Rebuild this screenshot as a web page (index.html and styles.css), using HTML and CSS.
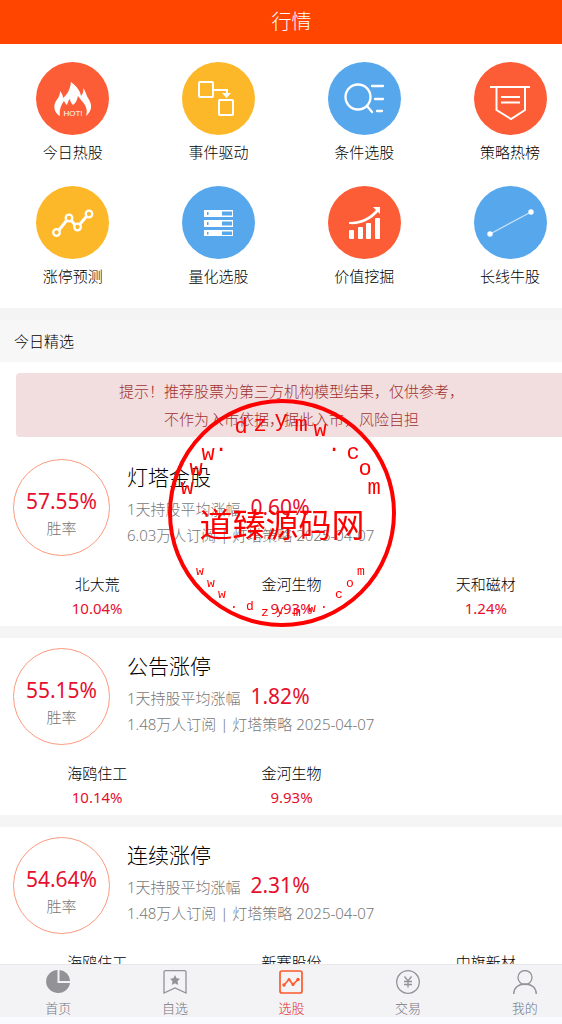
FILE: index.html
```html
<!DOCTYPE html>
<html lang="zh-CN">
<head>
    <meta charset="UTF-8">
    <meta name="viewport" content="width=device-width, initial-scale=1.0">
    <title>行情</title>
    <link rel="stylesheet" href="styles.css">
</head>
<body>
<div class="page">

    <header class="header">
        <h1>行情</h1>
    </header>

    <main class="content">

        <!-- 功能入口 -->
        <nav class="menu">
            <a href="#">
                <svg class="menu-icon red" viewBox="0 0 73 73">
                    <path fill="#fff" d="M24 54C18 51 17 44 20 39C23 35 24 33 24 29C26 31 27 34 27 36C32 32 34 27 35 20C40 24 44 28 45 34C47 31 48 29 47 26C50 29 50 33 52 36C56 42 57 48 50 54C52 48 50 43 45 38L42 34C41 38 40 41 37 43C35 41 34 39 34 37C32 38 32 41 31 43C29 42 29 40 28 39C25 43 23 48 24 54Z"/>
                    <text x="37" y="54" class="hot">HOT!</text>
                </svg>
                <span>今日热股</span>
            </a>
            <a href="#">
                <svg class="menu-icon yellow line" viewBox="0 0 73 73">
                    <rect x="17" y="20" width="14" height="15" rx="1"/>
                    <rect x="37" y="38" width="14" height="15" rx="1"/>
                    <path d="M32 28H45V32"/>
                    <path fill="#fff" stroke="none" d="M40 31H49L44.5 36Z"/>
                </svg>
                <span>事件驱动</span>
            </a>
            <a href="#">
                <svg class="menu-icon blue line bold" viewBox="0 0 73 73">
                    <circle cx="30" cy="35" r="12.5"/>
                    <path stroke-linecap="round" d="M39 44L44 50M44 24H55M47 37H55M49 49H54"/>
                </svg>
                <span>条件选股</span>
            </a>
            <a href="#">
                <svg class="menu-icon red line" viewBox="0 0 73 73">
                    <path d="M16 25H56M22.5 25V48L37 57L51 48V25M27 35H46M27 40.5H46"/>
                </svg>
                <span>策略热榜</span>
            </a>
            <a href="#">
                <svg class="menu-icon yellow line bold" viewBox="0 0 73 73">
                    <path stroke-width="3" d="M23 44L31 34M35 34L39 39M44 38L51 30"/>
                    <circle cx="20.5" cy="46.5" r="3.3"/>
                    <circle cx="33" cy="32" r="3.3"/>
                    <circle cx="41.5" cy="41" r="3.3"/>
                    <circle cx="53" cy="28" r="3.3"/>
                </svg>
                <span>涨停预测</span>
            </a>
            <a href="#">
                <svg class="menu-icon blue" viewBox="0 0 73 73">
                    <g fill="#fff" fill-rule="evenodd">
                        <path d="M22 24H51V31H22ZM40 25.5V29.5H50V25.5ZM25 26V29H26.5V26Z"/>
                        <path d="M22 34H51V41H22ZM40 35.5V39.5H50V35.5ZM25 36V39H26.5V36Z"/>
                        <path d="M22 44H51V50H22ZM40 45.5V49H50V45.5ZM25 46V48.5H26.5V46Z"/>
                    </g>
                </svg>
                <span>量化选股</span>
            </a>
            <a href="#">
                <svg class="menu-icon red" viewBox="0 0 73 73">
                    <g fill="#fff">
                        <rect x="21" y="44" width="5" height="9" rx="1"/>
                        <rect x="30" y="41" width="5" height="12" rx="1"/>
                        <rect x="38" y="37" width="5" height="16" rx="1"/>
                        <rect x="47" y="32" width="5" height="21" rx="1"/>
                        <path d="M45 21H52V28L50 26C43 34 33 39 21 38V36C32 36 41 32 48 24Z"/>
                    </g>
                </svg>
                <span>价值挖掘</span>
            </a>
            <a href="#">
                <svg class="menu-icon blue" viewBox="0 0 73 73">
                    <path stroke="#c5e1f8" stroke-width="1.3" d="M16 48L57 26"/>
                    <circle cx="16" cy="48" r="2.7" fill="#fff"/>
                    <circle cx="57" cy="26" r="2.7" fill="#fff"/>
                </svg>
                <span>长线牛股</span>
            </a>
        </nav>

        <h2 class="section-title">今日精选</h2>

        <p class="alert">提示！推荐股票为第三方机构模型结果，仅供参考，<br>不作为入市依据，据此入市，风险自担</p>

        <!-- 策略列表 -->
        <section class="card">
            <div class="card-top">
                <div class="rate"><b>57.55%</b><span>胜率</span></div>
                <div class="info">
                    <h3>灯塔金股</h3>
                    <p>1天持股平均涨幅 <em>0.60%</em></p>
                    <p>6.03万人订阅 | 灯塔策略 2025-04-07</p>
                </div>
            </div>
            <ul class="stocks">
                <li>北大荒<span>10.04%</span></li>
                <li>金河生物<span>9.93%</span></li>
                <li>天和磁材<span>1.24%</span></li>
            </ul>
        </section>

        <section class="card">
            <div class="card-top">
                <div class="rate"><b>55.15%</b><span>胜率</span></div>
                <div class="info">
                    <h3>公告涨停</h3>
                    <p>1天持股平均涨幅 <em>1.82%</em></p>
                    <p>1.48万人订阅 | 灯塔策略 2025-04-07</p>
                </div>
            </div>
            <ul class="stocks">
                <li>海鸥住工<span>10.14%</span></li>
                <li>金河生物<span>9.93%</span></li>
            </ul>
        </section>

        <section class="card">
            <div class="card-top">
                <div class="rate"><b>54.64%</b><span>胜率</span></div>
                <div class="info">
                    <h3>连续涨停</h3>
                    <p>1天持股平均涨幅 <em>2.31%</em></p>
                    <p>1.48万人订阅 | 灯塔策略 2025-04-07</p>
                </div>
            </div>
            <ul class="stocks">
                <li>海鸥住工</li>
                <li>新赛股份</li>
                <li>中旗新材</li>
            </ul>
        </section>
    </main>

    <!-- 底部导航 -->
    <nav class="tabbar">
        <a href="#">
            <svg viewBox="0 0 24 24"><path fill="#929297" stroke="none" d="M11.5 0V13H24A12 11.5 0 1 1 11.5 0ZM13.5 0A11 11 0 0 1 24 11H13.5Z"/></svg>
            首页
        </a>
        <a href="#">
            <svg viewBox="0 0 24 24">
                <path d="M1 23V2Q1 .7 2.5 .7H21.5Q23 .7 23 2V23L12 18Z"/>
                <path fill="#929297" stroke="none" d="M12 5L13.6 8.3L17 8.8L14.5 11.2L15.2 15L12 13.2L8.8 15L9.5 11.2L7 8.8L10.4 8.3Z"/>
            </svg>
            自选
        </a>
        <a href="#" class="active">
            <svg viewBox="0 0 24 24">
                <rect x="1" y="1" width="22" height="22" rx="2"/>
                <path d="M5 15L10 9.5L14 14.5L19 9.5"/>
                <g fill="#fc5a2c" stroke="none"><circle cx="5" cy="15" r="1.7"/><circle cx="10" cy="9.5" r="1.5"/><circle cx="14" cy="14.5" r="1.5"/><circle cx="19" cy="9.5" r="1.7"/></g>
            </svg>
            选股
        </a>
        <a href="#">
            <svg viewBox="0 0 24 24">
                <circle cx="12" cy="12" r="11.3"/>
                <path d="M8.5 6.5L12 11L15.5 6.5M12 11V17.5M8 11.5H16M8 14.5H16"/>
            </svg>
            交易
        </a>
        <a href="#">
            <svg viewBox="0 0 24 24">
                <circle cx="12" cy="7.5" r="7"/>
                <path d="M.7 24C.7 18 5 14 12 14S23.3 18 23.3 24"/>
            </svg>
            我的
        </a>
    </nav>

    <!-- 印章 -->
    <svg class="stamp" viewBox="167 398 230 230">
        <circle cx="282" cy="513" r="112"/>
        <text class="stamp-name" x="282" y="537">道臻源码网</text>
        <g class="stamp-top">
            <text x="187" y="494">w</text><text x="196" y="475">w</text><text x="208" y="460">w</text><text x="221" y="451">.</text>
            <text x="241" y="433">d</text><text x="260" y="431">z</text><text x="281" y="426">y</text><text x="301" y="431">m</text><text x="320" y="436">w</text>
            <text x="334" y="451">.</text><text x="353" y="459">c</text><text x="365" y="475">o</text><text x="374" y="494">m</text>
        </g>
        <g class="stamp-bottom">
            <text x="200" y="575">w</text><text x="211" y="587">w</text><text x="222" y="598">w</text><text x="234" y="608">.</text>
            <text x="250" y="610">d</text><text x="265" y="616">z</text><text x="280" y="614">y</text><text x="297" y="616">m</text><text x="312" y="612">w</text>
            <text x="324" y="608">.</text><text x="339" y="598">c</text><text x="350" y="587">o</text><text x="361" y="575">m</text>
        </g>
    </svg>
</div>
</body>
</html>
```
FILE: styles.css
```css
* {
    box-sizing: border-box;
    margin: 0;
    padding: 0;
}

body {
    font-family: "Noto Sans", "Noto Sans CJK SC", sans-serif;
    font-size: 15px;
    font-weight: 300;
    color: #000;
    background-color: #f9faff;
    overflow: hidden;
}

a {
    color: inherit;
    text-decoration: none;
}

/* a little wider than the screen, the right edge is cut off */
.page {
    position: relative;
    display: flex;
    flex-direction: column;
    width: calc(100% + 21px);
    height: 100vh;
    padding-bottom: 7px;
}

.header {
    background-color: #ff4500;
    text-align: center;
}

.header h1 {
    font-size: 20px;
    font-weight: 300;
    line-height: 44px;
    color: #fff;
}

.content {
    flex: 1;
    min-height: 0;
    overflow-y: auto;
    scrollbar-width: none;
    background-color: #fff;
}

/* Menu */
.menu {
    display: grid;
    grid-template-columns: repeat(4, 1fr);
    row-gap: 22px;
    padding: 18px 0 20px;
}

.menu a {
    display: flex;
    flex-direction: column;
    align-items: center;
    gap: 5px;
    line-height: 24px;
}

.menu-icon {
    width: 73px;
    height: 73px;
    border-radius: 50%;
    fill: none;
}

.red {
    background-color: #fc5d36;
}

.yellow {
    background-color: #fdb82a;
}

.blue {
    background-color: #57a7ec;
}

.line {
    stroke: #fff;
    stroke-width: 2;
}

.bold {
    stroke-width: 2.3;
}

.hot {
    fill: #fff;
    font-family: "Liberation Sans", sans-serif;
    font-size: 8px;
    font-weight: 400;
    text-anchor: middle;
}

.section-title {
    border-top: 12px solid #f4f4f4;
    padding-left: 14px;
    background-color: #f7f7f7;
    font-size: 15px;
    font-weight: 300;
    line-height: 42px;
}

.alert {
    margin: 11px 16px 12px;
    padding: 4px;
    border-radius: 4px;
    background-color: #f2dede;
    color: #a03230;
    line-height: 28px;
    text-align: center;
}

/* Cards */
.card {
    padding: 10px 0 6px;
    border-bottom: 12px solid #f5f5f5;
}

.card-top {
    display: flex;
    gap: 17px;
    padding-left: 13px;
}

.rate {
    display: flex;
    flex-direction: column;
    align-items: center;
    width: 97px;
    height: 97px;
    padding-top: 26px;
    border: 1px solid #fc9a80;
    border-radius: 50%;
    color: #777;
    line-height: 24px;
}

.rate b {
    font-size: 21px;
    font-weight: 400;
    line-height: 30px;
    color: #e60f2d;
}

.info {
    color: #777;
    line-height: 26px;
}

.info h3 {
    font-size: 21px;
    font-weight: 300;
    line-height: 36px;
    color: #000;
}

.info em {
    margin-left: 6px;
    font-size: 21px;
    font-style: normal;
    font-weight: 400;
    line-height: 24px;
    color: #e60f2d;
}

.stocks {
    display: grid;
    grid-template-columns: repeat(3, 1fr);
    margin-top: 16px;
    list-style: none;
    line-height: 24px;
    text-align: center;
}

.stocks span {
    display: block;
    font-weight: 400;
    color: #e60f2d;
}

/* Tab bar */
.tabbar {
    display: flex;
    border-top: 1px solid #e8e8ea;
    background-color: #f3f3f6;
}

.tabbar a {
    flex: 1;
    display: flex;
    flex-direction: column;
    align-items: center;
    gap: 5px;
    padding-top: 5px;
    font-size: 13px;
    line-height: 18px;
    color: #75757a;
}

.tabbar svg {
    width: 24px;
    height: 24px;
    fill: none;
    stroke: #929297;
    stroke-width: 1.3;
}

.tabbar .active {
    color: #e01f2d;
}

.tabbar .active svg {
    stroke: #fc5a2c;
    stroke-width: 1.7;
}

/* Stamp */
.stamp {
    position: absolute;
    top: 398px;
    left: 167px;
    width: 230px;
    height: 230px;
    pointer-events: none;
    fill: #f00;
    font-family: "Liberation Mono", "Noto Sans CJK SC", monospace;
    font-weight: 400;
    text-anchor: middle;
}

.stamp circle {
    fill: none;
    stroke: #f00;
    stroke-width: 4;
}

.stamp-name {
    font-size: 33px;
}

.stamp-top {
    font-size: 22px;
}

.stamp-bottom {
    font-size: 13px;
}
```
